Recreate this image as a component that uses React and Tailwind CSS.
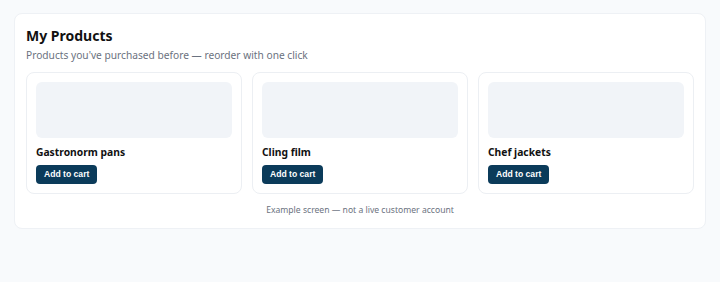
export default function App() {
  const products = ["Gastronorm pans", "Cling film", "Chef jackets"];
  return (
    <div className="min-h-[282px] bg-[#f8fafc] pt-[13px] px-[14px]" style={{ fontFamily: '"Noto Sans", sans-serif' }}>
      <div className="rounded-lg border border-[#eef1f5] bg-white px-[11px] pt-[12px] pb-[12px]">
        <h1 className="text-[14px] font-bold leading-[20px] text-[#111]">My Products</h1>
        <p className="mt-[2px] text-[10.2px] leading-[14px] text-[#6b7280]">Products you've purchased before — reorder with one click</p>
        <div className="mt-[10px] grid grid-cols-3 gap-[10px]">
          {products.map((p) => (
            <div key={p} className="rounded-lg border border-[#eceff3] bg-white p-[9px]">
              <div className="h-[56px] rounded-md bg-[#f1f4f8]"></div>
              <div className="mt-[7px] text-[10.3px] font-bold leading-[14px] text-[#111]">{p}</div>
              <button className="mt-[6px] block h-[19px] rounded-[4px] bg-[#0b3b5a] px-[8px] text-[8.6px] font-bold leading-[19px] text-white" style={{ fontFamily: '"Liberation Sans", Arial, sans-serif' }}>Add to cart</button>
            </div>
          ))}
        </div>
        <p className="mt-[10px] text-center text-[8.6px] leading-[12px] text-[#6b7280]">Example screen — not a live customer account</p>
      </div>
    </div>
  );
}
